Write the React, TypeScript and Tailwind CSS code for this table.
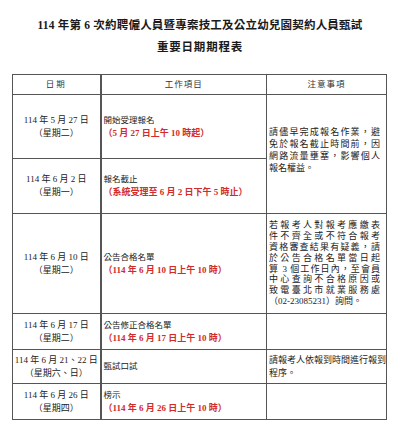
import React from "react";

const F = "font-['Liberation_Serif','Noto_Sans_CJK_TC',serif]";

function DateCell({ a, b }: { a: string; b: string }) {
  return (
    <td className="border border-[#555] border-r-2 text-center align-middle text-[9px] leading-[13px] text-[#222]">
      <div>{a}</div>
      <div>{b}</div>
    </td>
  );
}

function WorkCell({ a, b }: { a: string; b?: string }) {
  return (
    <td className="border border-[#555] pl-[2px] align-middle text-[8.5px] leading-[13px] text-[#222]">
      <div>{a}</div>
      {b && <div className="font-bold text-[#d22b2b] text-[9px]">{b}</div>}
    </td>
  );
}

function Lines({ lines, w, lh, justifyLast }: { lines: string[]; w: string; lh: string; justifyLast?: boolean }) {
  return (
    <div className={`${w} ${lh}`}>
      {lines.map((l, i) => {
        const last = i === lines.length - 1;
        return (
          <div
            key={i}
            className={
              last && !justifyLast
                ? "whitespace-nowrap"
                : "whitespace-nowrap text-justify [text-align-last:justify]"
            }
          >
            {l}
          </div>
        );
      })}
    </div>
  );
}

export default function App() {
  return (
    <div className={`w-[400px] h-[434px] bg-white ${F} text-[#222]`}>
      <div className="pt-[14px] text-center font-bold text-[11.5px] leading-[22px] tracking-[0.2px] text-[#1a1a1a]">
        <div>114 年第 6 次約聘僱人員暨專案技工及公立幼兒園契約人員甄試</div>
        <div className="tracking-[0.8px]">重要日期期程表</div>
      </div>
      <table className="mt-[16px] ml-[12px] w-[374px] table-fixed border-collapse border-[1.5px] border-[#555]">
        <colgroup>
          <col className="w-[88px]" />
          <col className="w-[166px]" />
          <col className="w-[120px]" />
        </colgroup>
        <tbody>
          <tr className="h-[20px] text-[8.5px] text-center text-[#333]">
            <td className="border border-[#555] border-r-2 tracking-[2px]">日期</td>
            <td className="border border-[#555] tracking-[1px]">工作項目</td>
            <td className="border border-[#555] tracking-[1px]">注意事項</td>
          </tr>
          <tr className="h-[64px]">
            <DateCell a="114 年 5 月 27 日" b="（星期二）" />
            <WorkCell a="開始受理報名" b="（5 月 27 日上午 10 時起）" />
            <td rowSpan={2} className="border border-[#555] pl-[2px] align-middle text-[9px] text-[#222]">
              <div className="-mt-[8px]">
                <Lines
                  w="w-[111px]"
                  lh="leading-[12px]"
                  lines={["請儘早完成報名作業，避", "免於報名截止時間前，因", "網路流量壅塞，影響個人", "報名權益。"]}
                />
              </div>
            </td>
          </tr>
          <tr className="h-[55px]">
            <DateCell a="114 年 6 月 2 日" b="（星期一）" />
            <WorkCell a="報名截止" b="（系統受理至 6 月 2 日下午 5 時止）" />
          </tr>
          <tr className="h-[100px]">
            <DateCell a="114 年 6 月 10 日" b="（星期二）" />
            <WorkCell a="公告合格名單" b="（114 年 6 月 10 日上午 10 時）" />
            <td className="border border-[#555] pl-[2px] align-middle text-[9px] text-[#222]">
              <Lines
                w="w-[111px]"
                lh="leading-[10.9px]"
                lines={[
                  "若報考人對報考應繳表",
                  "件不齊全或不符合報考",
                  "資格審查結果有疑義，請",
                  "於公告合格名單當日起",
                  "算 3 個工作日內，至會員",
                  "中心查詢不合格原因或",
                  "致電臺北市就業服務處",
                  "（02-23085231）詢問。",
                ]}
              />
            </td>
          </tr>
          <tr className="h-[36px]">
            <DateCell a="114 年 6 月 17 日" b="（星期二）" />
            <WorkCell a="公告修正合格名單" b="（114 年 6 月 17 日上午 10 時）" />
            <td className="border border-[#555]"></td>
          </tr>
          <tr className="h-[34px]">
            <DateCell a="114 年 6 月 21、22 日" b="（星期六、日）" />
            <WorkCell a="甄試口試" />
            <td className="border border-[#555] pl-[2px] align-middle text-[9px] text-[#222]">
              <Lines
                w="w-[116px]"
                lh="leading-[12.5px]"
                lines={["請報考人依報到時間進行報到", "程序。"]}
              />
            </td>
          </tr>
          <tr className="h-[36px]">
            <DateCell a="114 年 6 月 26 日" b="（星期四）" />
            <WorkCell a="榜示" b="（114 年 6 月 26 日上午 10 時）" />
            <td className="border border-[#555]"></td>
          </tr>
        </tbody>
      </table>
    </div>
  );
}
